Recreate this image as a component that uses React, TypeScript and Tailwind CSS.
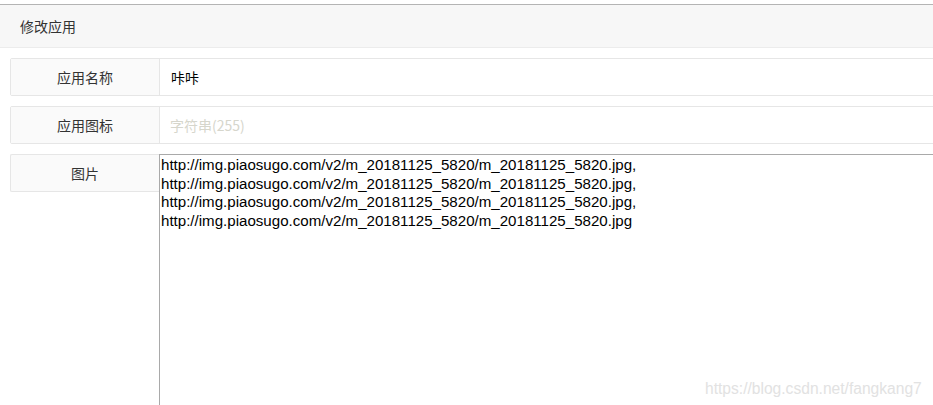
import React from "react";

const url = "http://img.piaosugo.com/v2/m_20181125_5820/m_20181125_5820.jpg";
const lines = [url + ",", url + ",", url + ",", url];

export default function App() {
  return (
    <div
      className="relative w-[933px] h-[405px] overflow-hidden bg-white text-[#333333]"
      style={{ fontFamily: '"Noto Sans CJK SC", "Noto Sans", sans-serif' }}
    >
      <div className="h-[4px]" />
      <div className="h-[44px] border-t border-b border-t-[#b4b4b4] border-b-[#ececec] bg-[#f7f7f7] flex items-center px-[20px] text-[14px]">
        修改应用
      </div>
      <div className="pl-[10px] pt-[10px] w-[990px]">
        <div className="h-[38px] flex border border-[#e6e6e6] rounded-[2px] mb-[10px]">
          <div className="w-[149px] shrink-0 bg-[#fafafa] border-r border-[#e6e6e6] flex items-center justify-center text-[14px]">
            应用名称
          </div>
          <div className="flex-1 flex items-center pl-[11px] text-[14px] text-black">咔咔</div>
        </div>
        <div className="h-[38px] flex border border-[#e6e6e6] rounded-[2px] mb-[10px]">
          <div className="w-[149px] shrink-0 bg-[#fafafa] border-r border-[#e6e6e6] flex items-center justify-center text-[14px]">
            应用图标
          </div>
          <div className="flex-1 flex items-center pl-[10px] text-[14px] text-[#d6d6cc]">字符串(255)</div>
        </div>
        <div className="flex items-start">
          <div className="w-[149px] h-[38px] shrink-0 bg-[#fafafa] border-l border-t border-b border-[#e6e6e6] rounded-l-[2px] flex items-center justify-center text-[14px]">
            图片
          </div>
          <div
            className="flex-1 h-[300px] border border-[#a9a9a9] pl-[1px] pt-[1px] text-[15.1px] leading-[18.5px] text-black whitespace-pre"
            style={{ fontFamily: '"Liberation Sans", Arial, sans-serif' }}
          >
            {lines.map((l, i) => (
              <div key={i}>{l}</div>
            ))}
          </div>
        </div>
      </div>
      <div
        className="absolute left-[705px] top-[377px] text-[15.6px] text-[#e2e2e2]"
        style={{ fontFamily: '"Liberation Sans", Arial, sans-serif' }}
      >
        https://blog.csdn.net/fangkang7
      </div>
    </div>
  );
}
